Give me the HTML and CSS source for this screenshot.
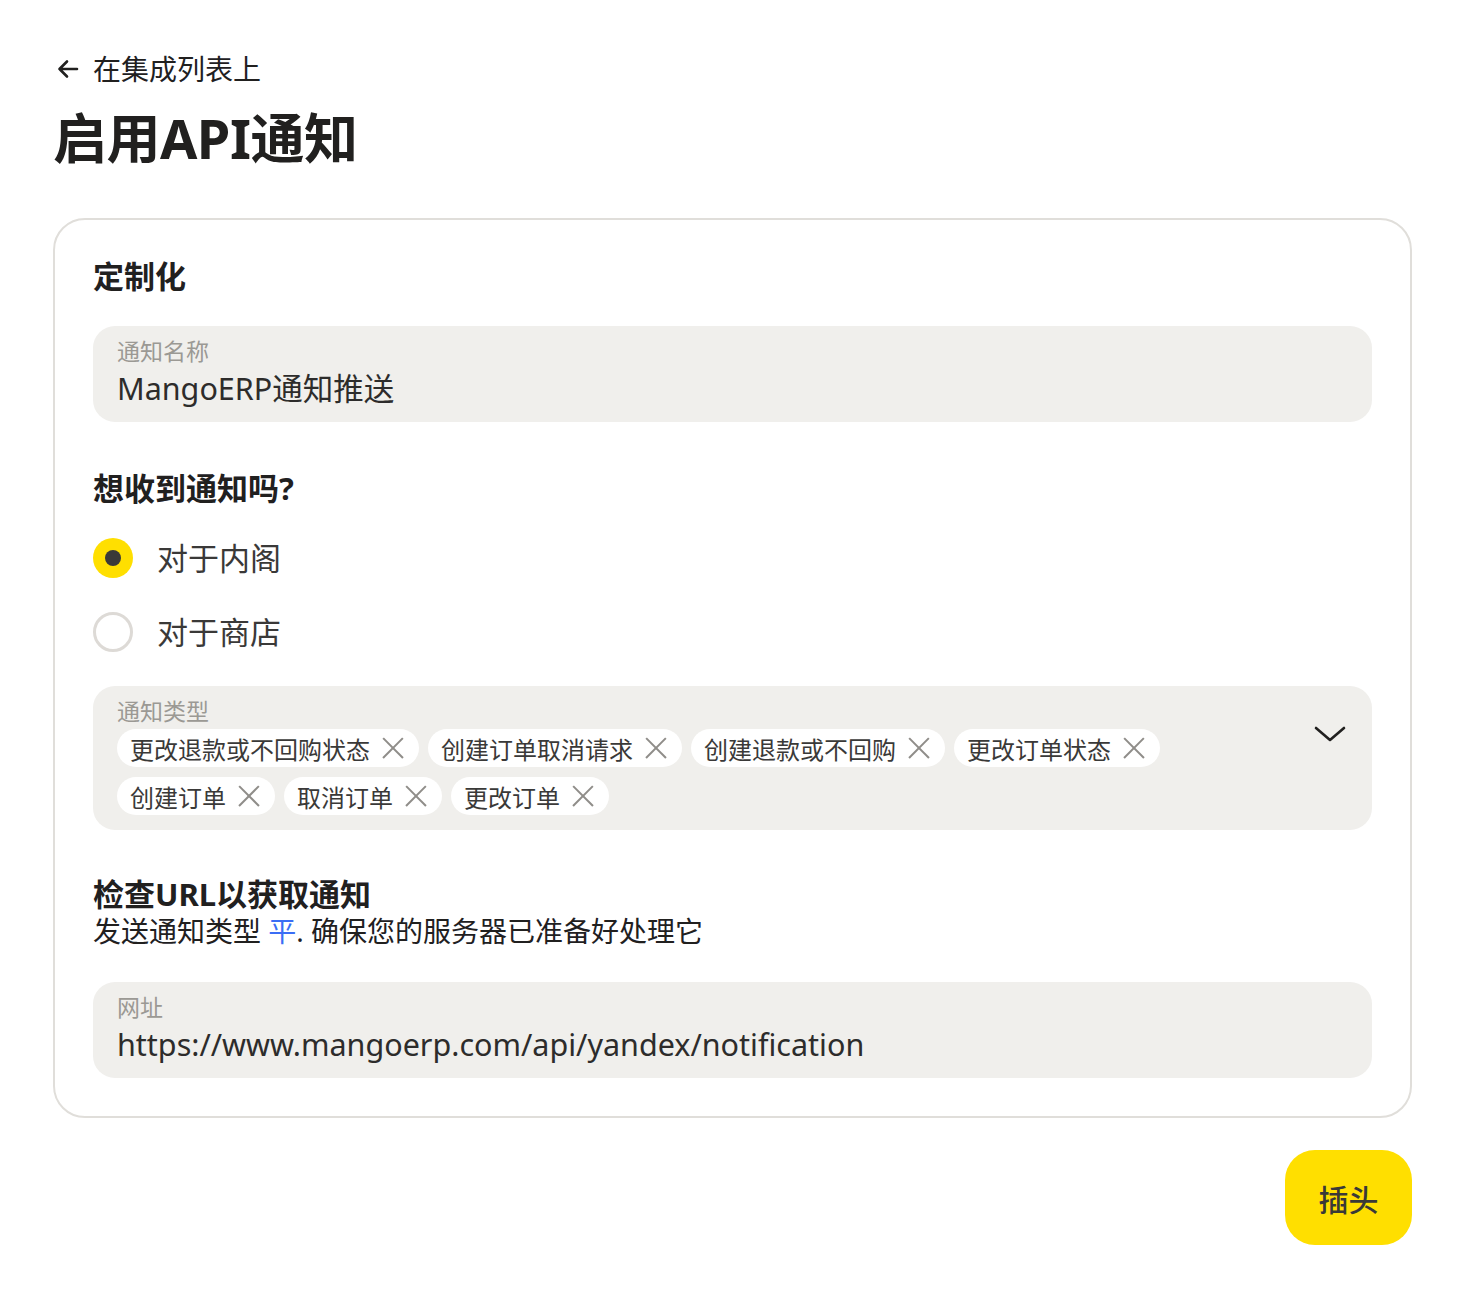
FILE: index.html
```html
<!DOCTYPE html>
<html lang="zh">
<head>
<meta charset="utf-8">
<title>启用API通知</title>
<link rel="stylesheet" href="styles.css">
</head>
<body>
<div class="page">
  <a class="back" href="#">
    <svg class="back-icon" width="26" height="26" viewBox="0 0 26 26"><path d="M22 13H4.5M12 5.5L4.5 13l7.5 7.5" fill="none" stroke="#21201f" stroke-width="2.6" stroke-linecap="round" stroke-linejoin="round"/></svg>
    <span>在集成列表上</span>
  </a>
  <h1 class="title">启用API通知</h1>

  <div class="card">
    <h2 class="section">定制化</h2>
    <div class="field">
      <div class="field-label">通知名称</div>
      <div class="field-value">MangoERP通知推送</div>
    </div>

    <h2 class="section ask">想收到通知吗?</h2>
    <div class="radios">
      <label class="radio"><span class="dot checked"></span><span>对于内阁</span></label>
      <label class="radio"><span class="dot"></span><span>对于商店</span></label>
    </div>

    <div class="field multi">
      <div class="multi-body">
        <div class="field-label">通知类型</div>
        <div class="chips">
          <span class="chip">更改退款或不回购状态<i class="x"></i></span>
          <span class="chip">创建订单取消请求<i class="x"></i></span>
          <span class="chip">创建退款或不回购<i class="x"></i></span>
          <span class="chip">更改订单状态<i class="x"></i></span>
          <span class="chip">创建订单<i class="x"></i></span>
          <span class="chip">取消订单<i class="x"></i></span>
          <span class="chip">更改订单<i class="x"></i></span>
        </div>
      </div>
      <svg class="chevron" width="32" height="18" viewBox="0 0 32 18"><path d="M2 3l14 12L30 3" fill="none" stroke="#21201f" stroke-width="2.6" stroke-linecap="round" stroke-linejoin="round"/></svg>
    </div>

    <h2 class="section check">检查URL以获取通知</h2>
    <p class="hint">发送通知类型 <a href="#">平</a>. 确保您的服务器已准备好处理它</p>
    <div class="field url">
      <div class="field-label">网址</div>
      <div class="field-value">https://www.mangoerp.com/api/yandex/notification</div>
    </div>
  </div>

  <div class="actions">
    <button class="btn">插头</button>
  </div>
</div>
</body>
</html>
```

FILE: styles.css
```css
body {
  margin: 0;
  background: #fff;
  color: #21201f;
  font-family: "Noto Sans", "Noto Sans CJK SC", sans-serif;
}

.page {
  padding: 50px 62px 40px 53px;
}

.back {
  display: flex;
  align-items: center;
  gap: 12px;
  padding-left: 2px;
  color: #21201f;
  text-decoration: none;
  font-size: 28px;
  line-height: 38px;
}

.title {
  margin: 14px 0 0;
  font-size: 54px;
  line-height: 72px;
  font-weight: 700;
  letter-spacing: -0.5px;
}

.card {
  margin-top: 44px;
  border: 2px solid #e0deda;
  border-radius: 32px;
  padding: 36px 38px 38px;
}

.section {
  margin: 0;
  font-size: 31px;
  line-height: 40px;
  font-weight: 700;
}

.field {
  margin-top: 30px;
  background: #f0efec;
  border-radius: 22px;
  padding: 9px 24px 13px;
}

.field-label {
  font-size: 23px;
  line-height: 32px;
  color: #9b9994;
}

.field-value {
  font-size: 30.5px;
  line-height: 42px;
  color: #2d2c2b;
}

.ask {
  margin-top: 46px;
}

.radios {
  margin-top: 30px;
  display: flex;
  flex-direction: column;
  gap: 34px;
}

.radio {
  display: flex;
  align-items: center;
  gap: 24px;
  font-size: 31px;
  line-height: 40px;
  color: #3a3938;
}

.dot {
  width: 40px;
  height: 40px;
  box-sizing: border-box;
  border: 3px solid #dddad6;
  border-radius: 50%;
  display: flex;
  align-items: center;
  justify-content: center;
}

.dot.checked {
  border: none;
  background: #ffdf00;
}

.dot.checked::after {
  content: "";
  width: 16px;
  height: 16px;
  border-radius: 50%;
  background: #3a3938;
}

.multi {
  margin-top: 34px;
  display: flex;
  align-items: flex-start;
  gap: 16px;
  padding-bottom: 15px;
  padding-right: 26px;
}

.multi-body {
  flex: 1;
}

.chips {
  display: flex;
  flex-wrap: wrap;
  gap: 10px 9px;
  margin-top: 2px;
}

.chip {
  display: inline-flex;
  align-items: center;
  gap: 12px;
  background: #fff;
  border-radius: 19px;
  height: 38px;
  padding: 0 15px 0 13px;
  font-size: 24px;
  color: #3a3938;
}

.x {
  position: relative;
  width: 22px;
  height: 22px;
}

.x::before,
.x::after {
  content: "";
  position: absolute;
  left: -3px;
  top: 10px;
  width: 28px;
  height: 2.2px;
  background: #8f8d89;
  transform: rotate(45deg);
}

.x::after {
  transform: rotate(-45deg);
}

.chevron {
  margin-top: 30px;
}

.check {
  margin-top: 46px;
  line-height: 36px;
}

.hint {
  margin: 0;
  font-size: 28px;
  line-height: 38px;
}

.hint a {
  color: #3b6df5;
  text-decoration: none;
}

.url {
  margin-top: 32px;
}

.actions {
  display: flex;
  justify-content: flex-end;
  margin-top: 32px;
}

.btn {
  width: 127px;
  height: 95px;
  border: none;
  border-radius: 30px;
  background: #ffdf00;
  color: #3a3938;
  font-family: "Noto Sans", "Noto Sans CJK SC", sans-serif;
  font-size: 30px;
  font-weight: 500;
}
```
